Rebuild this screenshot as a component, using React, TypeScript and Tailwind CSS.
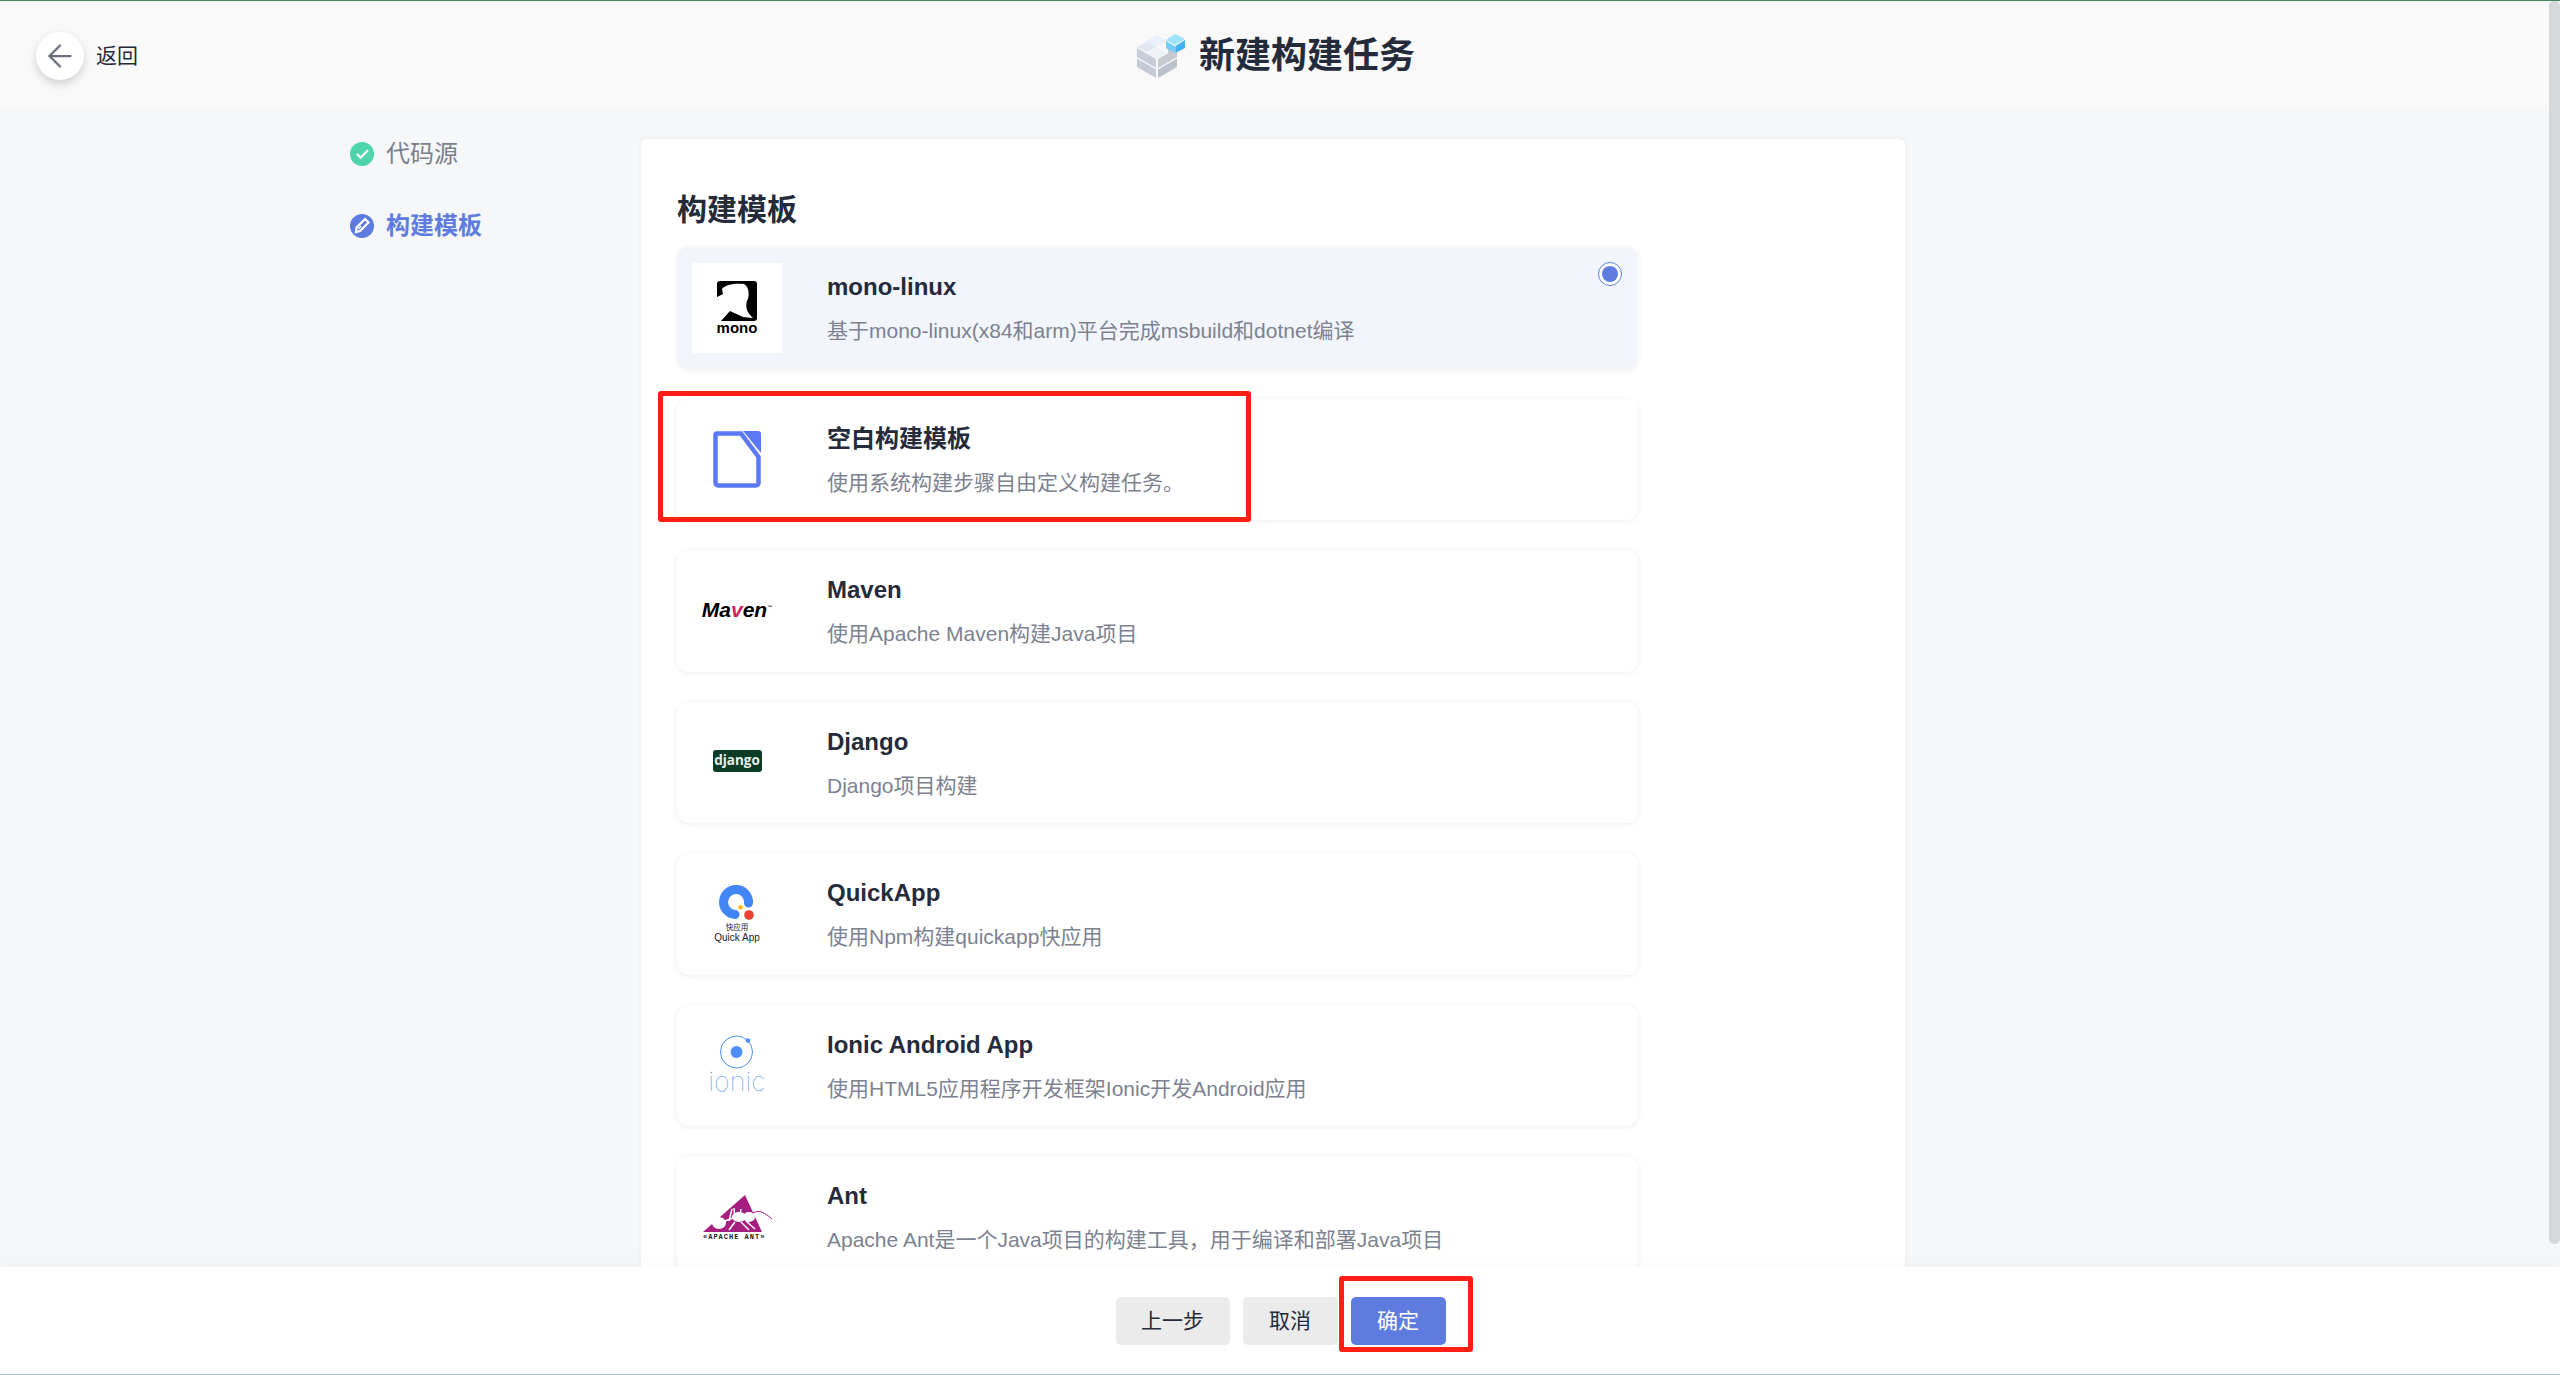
import React from 'react';
import { ArrowLeft, Check } from 'lucide-react';

const CubeLogo = () => (
  <svg width="48" height="44" viewBox="0 0 48 44">
    <polygon points="9,7 20,1 31,7 20,13" fill="#e9f0fb" />
    <polygon points="0,13 10,8 19.500,13 10,18" fill="#e1e6f0" />
    <polygon points="10.500,19 20,13.500 30,19 20,25" fill="#eef2f9" />
    <polygon points="0,14 19,25 19,34 0,23" fill="#c8ced9" />
    <polygon points="0,24.500 19,35.500 19,44 0,33" fill="#c4cad6" />
    <polygon points="21,25 31,19.500 31,9 40,14 40,23 21,34" fill="#c6cad3" />
    <polygon points="21,35.500 40,24.500 40,33 21,44" fill="#bcc2cc" />
    <polygon points="29,6 38,0 48,5 38,11" fill="#9fe3fb" />
    <polygon points="29,7 37.500,12 37.500,19 29,14" fill="#74cdf6" />
    <polygon points="38.500,12 48,6 48,14 38.500,19" fill="#45b0ec" />
  </svg>
);

const MonoLogo = () => (
  <div className="flex flex-col items-center">
    <svg width="40" height="40" viewBox="0 0 40 40">
      <rect width="40" height="40" rx="3" fill="#000" />
      <path d="M0 16 L6 13 L5 8 C8 3 20 2 27 3 C32 6 33 14 30 20 C28 26 30 32 36 37 L26 36 L13 30 L4 40 L0 40 Z" fill="#fff" />
    </svg>
    <span className='font-["Liberation_Sans",sans-serif] text-[15px] leading-[13px] font-bold text-black'>mono</span>
  </div>
);

const PageLogo = () => (
  <svg width="48" height="57" viewBox="0 0 48 57">
    <path d="M4 2.500 H28 L45.500 26 V52 a2.500 2.500 0 0 1 -2.500 2.500 H5 a2.500 2.500 0 0 1 -2.500 -2.500 V4 a1.500 1.500 0 0 1 1.500 -1.500 Z" fill="#fff" stroke="#5b78f6" strokeWidth="4.500" />
    <path d="M30 0 H45 a3 3 0 0 1 3 3 V22 Z" fill="#5b78f6" />
  </svg>
);

const MavenLogo = () => (
  <span className='mb-[2px] font-["Liberation_Sans",sans-serif] text-[21px] leading-none font-bold italic text-black'>
    Ma<span className="text-[#d0225f]">v</span>en
    <span className="align-super text-[5px]">™</span>
  </span>
);

const DjangoLogo = () => (
  <div className='mb-[2px] flex h-[22px] w-[49px] items-center justify-center rounded-[3px] bg-[#0c3c26] pb-[2px] font-["Open_Sans",sans-serif] text-[13.5px] leading-none font-bold text-[#e6efe9]'>
    django
  </div>
);

const QuickLogo = () => (
  <div className="flex flex-col items-center">
    <svg width="36" height="36" viewBox="0 0 36 36">
      <path d="M29.500 18 A12.500 12.500 0 1 0 16 29.500" fill="none" stroke="#4285f4" strokeWidth="9" strokeLinecap="round" />
      <circle cx="21.600" cy="22.300" r="2.300" fill="#fbbc05" />
      <circle cx="30" cy="30" r="4.800" fill="#ea4335" />
    </svg>
    <span className='mt-[1px] font-["Noto_Sans_CJK_SC",sans-serif] text-[7.5px] leading-[10px] text-[#222]'>快应用</span>
    <span className='font-["Liberation_Sans",sans-serif] text-[10px] leading-[11px] text-[#222]'>Quick App</span>
  </div>
);

const IonicLogo = () => (
  <div className="mb-[4px] flex flex-col items-center">
    <svg width="36" height="35" viewBox="0 0 36 35">
      <circle cx="17.500" cy="18" r="16" fill="none" stroke="#4f8ef7" strokeWidth="1" />
      <circle cx="17.500" cy="18" r="6" fill="#4f8ef7" />
      <circle cx="29" cy="6.500" r="2.300" fill="#4f8ef7" />
    </svg>
    <span className='mt-[3px] font-["Inter",sans-serif] text-[27px] leading-[20px] font-thin text-[#4f8ef7]'>ionic</span>
  </div>
);

const AntLogo = () => (
  <div className="flex w-[76px] flex-col items-start">
    <svg width="76" height="40" viewBox="0 0 76 40">
      <polygon points="46,3 4,40 63,40" fill="#a61e80" />
      <ellipse cx="20" cy="31" rx="7" ry="6" fill="#fff" />
      <ellipse cx="40" cy="25" rx="7" ry="5" fill="#fff" />
      <ellipse cx="50" cy="25" rx="6" ry="5" fill="#fff" />
      <path d="M26 29 L34 26 M30 29 L33 17 M36 28 L35 16 M40 29 L42 17 M36 30 L30 38 M42 30 L50 38 M47 29 L56 37" fill="none" stroke="#fff" strokeWidth="1.500" />
      <path d="M54 21 C60 17 66 21 73 27" fill="none" stroke="#a61e80" strokeWidth="1" />
    </svg>
    <span className='mt-[1px] ml-[4px] font-["Liberation_Mono",monospace] text-[7px] leading-[9px] font-bold tracking-[1px] text-[#222]'>«APACHE ANT»</span>
  </div>
);

const templates = [
  { name: 'mono-linux', desc: '基于mono-linux(x84和arm)平台完成msbuild和dotnet编译', logo: <MonoLogo />, selected: true },
  { name: '空白构建模板', desc: '使用系统构建步骤自由定义构建任务。', logo: <PageLogo /> },
  { name: 'Maven', desc: '使用Apache Maven构建Java项目', logo: <MavenLogo /> },
  { name: 'Django', desc: 'Django项目构建', logo: <DjangoLogo /> },
  { name: 'QuickApp', desc: '使用Npm构建quickapp快应用', logo: <QuickLogo /> },
  { name: 'Ionic Android App', desc: '使用HTML5应用程序开发框架Ionic开发Android应用', logo: <IonicLogo /> },
  { name: 'Ant', desc: 'Apache Ant是一个Java项目的构建工具，用于编译和部署Java项目', logo: <AntLogo /> },
];

const App = () => {
  return (
    <div className='relative flex h-[1375px] flex-col overflow-hidden bg-[#f6f7f9] font-["Liberation_Sans","Noto_Sans_CJK_SC",sans-serif] text-[#252b3a]'>
      {/* Header */}
      <header className="grid h-[110px] shrink-0 grid-cols-[1fr_auto_1fr] items-center border-t border-[#3a8a60] bg-[#f9f9fa] pr-[44px] pl-[36px]">
        <div className="flex items-center gap-[12px]">
          <button className="flex h-[48px] w-[48px] items-center justify-center rounded-full bg-white shadow-[0_4px_10px_rgba(0,0,0,0.16)]">
            <ArrowLeft size={36} strokeWidth={1.5} className="text-[#6a6f7c]" />
          </button>
          <span className="text-[21px]">返回</span>
        </div>
        <div className="flex items-center gap-[14px]">
          <CubeLogo />
          <h1 className="text-[36px] font-bold">新建构建任务</h1>
        </div>
        <div />
      </header>

      {/* Body */}
      <main className="flex min-h-0 flex-1 overflow-hidden pt-[29px]">
        <aside className="w-[641px] shrink-0 pl-[350px]">
          <div className="mt-[1px] flex h-[28px] items-center gap-[12px] text-[24px] text-[#7a7f8b]">
            <span className="flex h-[24px] w-[24px] items-center justify-center rounded-full bg-[#50d4ab]">
              <Check size={15} strokeWidth={3.5} className="text-white" />
            </span>
            代码源
          </div>
          <div className="mt-[44px] flex h-[28px] items-center gap-[12px] text-[24px] font-bold text-[#5e7ce0]">
            <span className="flex h-[24px] w-[24px] items-center justify-center rounded-full bg-[#5e7ce0]">
              <svg width="18" height="18" viewBox="0 0 18 18" fill="none" stroke="#fff" strokeWidth="2.200">
                <path d="M12 2 L15.500 5.500 L7 14 L3 15 L3.500 10.500 Z" />
                <path d="M8 9 L5.500 12" strokeWidth="1.500" />
              </svg>
            </span>
            构建模板
          </div>
        </aside>

        <section className="w-[1264px] shrink-0 rounded-t-[6px] bg-white px-[36px] pt-[51px] shadow-[0_0_6px_rgba(0,0,0,0.05)]">
          <h2 className="mb-[17px] h-[40px] text-[30px] leading-[40px] font-bold">构建模板</h2>
          <div className="flex w-[961px] flex-col gap-[30px]">
            {templates.map((t) => (
              <div
                key={t.name}
                className={`relative flex h-[121.5px] shrink-0 items-center rounded-[12px] pl-[15px] shadow-[0_1px_6px_rgba(0,0,0,0.07)] ${t.selected ? 'bg-[#f2f5fc]' : 'bg-white'}`}
              >
                <div className="flex h-[90px] w-[90px] shrink-0 items-center justify-center bg-white">{t.logo}</div>
                <div className="ml-[45px] flex h-full flex-col pt-[22px]">
                  <div className="h-[36px] text-[24px] leading-[36px] font-bold">{t.name}</div>
                  <div className="mt-[12px] text-[21px] leading-[28px] text-[#7c8290]">{t.desc}</div>
                </div>
                {t.selected && (
                  <span className="absolute top-[15px] right-[16px] flex h-[24px] w-[24px] items-center justify-center rounded-full border border-[#5e7ce0] bg-white">
                    <span className="h-[16px] w-[16px] rounded-full bg-[#5e7ce0]" />
                  </span>
                )}
              </div>
            ))}
          </div>
        </section>
      </main>

      {/* Footer */}
      <footer className="z-10 flex h-[108px] shrink-0 items-start justify-center gap-[13px] border-b border-[#a6bfc0] bg-white pt-[30px] pl-[1px] shadow-[0_-6px_14px_rgba(0,0,0,0.02)]">
        <button className="h-[48px] w-[114px] rounded-[5px] bg-[#ebebeb] text-[21px]">上一步</button>
        <button className="h-[48px] w-[95px] rounded-[5px] bg-[#ebebeb] text-[21px]">取消</button>
        <button className="h-[48px] w-[95px] rounded-[5px] bg-[#5e7ce0] text-[21px] text-white">确定</button>
      </footer>

      {/* Annotation boxes */}
      <div className="absolute top-[391px] left-[658px] h-[131px] w-[593px] rounded-[3px] border-[5px] border-[#fe1f14]" />
      <div className="absolute top-[1276px] left-[1339px] z-20 h-[76px] w-[134px] rounded-[3px] border-[5px] border-[#fe1f14]" />

      {/* Overlay scrollbar */}
      <div className="absolute top-[1px] right-0 h-[1243px] w-[11px] rounded-[5px] bg-[#d6d7d8]" />
    </div>
  );
};

export default App;
